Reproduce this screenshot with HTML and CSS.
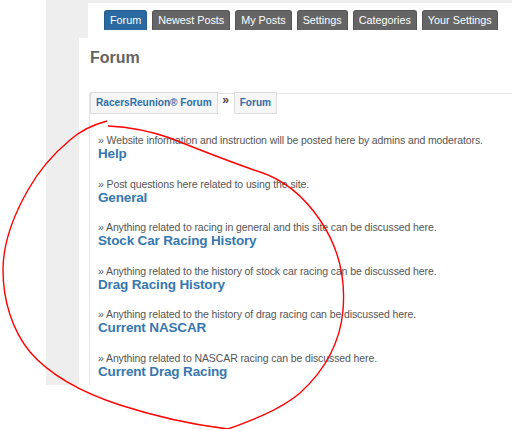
FILE: index.html
```html
<!DOCTYPE html>
<html>
<head>
<meta charset="utf-8">
<link rel="stylesheet" href="styles.css">
</head>
<body>
<div class="page">
  <div class="tabbar">
    <a class="tab active">Forum</a>
    <a class="tab">Newest Posts</a>
    <a class="tab">My Posts</a>
    <a class="tab">Settings</a>
    <a class="tab">Categories</a>
    <a class="tab">Your Settings</a>
  </div>
  <div class="panel">
    <h1 class="title">Forum</h1>
    <div class="content">
      <div class="crumbs">
        <a class="crumb">RacersReunion® Forum</a>
        <span class="sep">»</span>
        <a class="crumb">Forum</a>
      </div>
      <ul class="forums">
        <li class="item"><div class="desc">» Website information and instruction will be posted here by admins and moderators.</div><a class="name">Help</a></li>
        <li class="item"><div class="desc">» Post questions here related to using the site.</div><a class="name">General</a></li>
        <li class="item"><div class="desc">» Anything related to racing in general and this site can be discussed here.</div><a class="name">Stock Car Racing History</a></li>
        <li class="item"><div class="desc">» Anything related to the history of stock car racing can be discussed here.</div><a class="name">Drag Racing History</a></li>
        <li class="item"><div class="desc">» Anything related to the history of drag racing can be discussed here.</div><a class="name">Current NASCAR</a></li>
        <li class="item"><div class="desc">» Anything related to NASCAR racing can be discussed here.</div><a class="name">Current Drag Racing</a></li>
      </ul>
    </div>
  </div>
</div>
<svg class="scribble" width="512" height="429" viewBox="0 0 512 429">
  <path d="M107,121 C92,125 80,131 70,140 C52,155 38,172 28,190 C12,218 3,245 3,270 C3,300 12,330 30,352 C50,375 80,392 120,405 C160,418 195,425 228,429 C250,421 280,410 300,393 C322,373 340,345 343,310 C346,275 337,245 320,220 C305,198 285,180 260,172 C230,162 200,150 170,138 C150,131 128,127 108,126" fill="none" stroke="#f00" stroke-width="1.4"/>
</svg>
</body>
</html>
```
FILE: styles.css
```css
html, body {
  margin: 0;
  padding: 0;
  background: #fff;
  font-family: "Liberation Sans", Arial, sans-serif;
  overflow: hidden;
}
.page {
  margin-left: 46px;
  background: #eeeeee;
  height: 385px;
  padding-top: 3px;
  box-sizing: border-box;
}
.tabbar {
  margin-left: 42px;
  background: #fff;
  height: 35px;
  box-sizing: border-box;
  padding: 7px 0 0 16px;
  display: flex;
  gap: 5px;
}
.tab {
  height: 20px;
  box-sizing: border-box;
  padding: 0 5px;
  background: #656565;
  border: 1px solid #555;
  border-bottom: none;
  border-radius: 3px 3px 0 0;
  color: #fff;
  font-size: 10.8px;
  line-height: 19px;
  white-space: nowrap;
}
.tab.active {
  background: #2a6aa0;
  border-color: #245d8e;
}
.panel {
  margin-left: 33px;
  background: #fff;
  height: 347px;
  box-sizing: border-box;
  padding-top: 9px;
}
.title {
  margin: 0 0 0 11px;
  font-size: 16px;
  line-height: 19px;
  font-weight: bold;
  color: #636363;
  padding-top: 1px;
}
.content {
  margin: 26px 0 0 10px;
  border-left: 1px solid #e4e4e4;
  border-top: 1px solid #e4e4e4;
  height: 293px;
  box-sizing: border-box;
}
.crumbs {
  display: flex;
  align-items: flex-start;
  margin: -2px 0 0 0;
}
.crumb {
  height: 22px;
  box-sizing: border-box;
  border: 1px solid #dcdcdc;
  background: #f6f6f6;
  padding: 0 5px;
  color: #2d6da8;
  font-size: 10.1px;
  font-weight: bold;
  line-height: 20px;
}
.sep {
  width: 16px;
  text-align: center;
  font-size: 12px;
  font-weight: bold;
  color: #444;
  line-height: 16px;
}
.forums {
  list-style: none;
  margin: 20px 0 0 8px;
  padding: 0;
}
.item {
  margin-bottom: 15.5px;
}
.desc {
  font-size: 10.5px;
  letter-spacing: -0.1px;
  line-height: 12px;
  color: #555;
  white-space: nowrap;
}
.name {
  display: block;
  font-size: 13.5px;
  letter-spacing: -0.15px;
  line-height: 16px;
  font-weight: bold;
  color: #3677b0;
}
.scribble {
  position: absolute;
  left: 0;
  top: 0;
  pointer-events: none;
}
```
